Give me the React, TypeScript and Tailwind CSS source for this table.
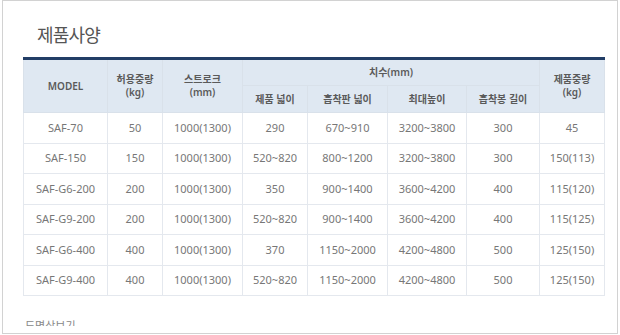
import React from 'react';

const rows = [
  ['SAF-70', '50', '1000(1300)', '290', '670~910', '3200~3800', '300', '45'],
  ['SAF-150', '150', '1000(1300)', '520~820', '800~1200', '3200~3800', '300', '150(113)'],
  ['SAF-G6-200', '200', '1000(1300)', '350', '900~1400', '3600~4200', '400', '115(120)'],
  ['SAF-G9-200', '200', '1000(1300)', '520~820', '900~1400', '3600~4200', '400', '115(125)'],
  ['SAF-G6-400', '400', '1000(1300)', '370', '1150~2000', '4200~4800', '500', '125(150)'],
  ['SAF-G9-400', '400', '1000(1300)', '520~820', '1150~2000', '4200~4800', '500', '125(150)'],
];

const widths = [84, 55, 80, 65, 80, 79, 73, 65];

const th = 'border border-[#d9e1ea] font-semibold text-[10px] leading-[13px] text-[#5a5a5a] text-center align-middle';
const td = 'border border-[#e4e8ee] text-[11px] text-[#777] text-center h-[30.5px] align-middle';

const App: React.FC = () => {
  return (
    <div
      className="w-[620px] h-[335px] bg-white"
      style={{ fontFamily: '"Noto Sans", "Noto Sans CJK KR", sans-serif' }}
    >
      <div className="ml-[2px] w-[616px] h-[334px] border border-[#d2d2d2] overflow-hidden">
        <div className="h-[325px] overflow-hidden pl-[20px]">
          <h1 className="pt-[22px] pl-[14px] text-[18px] leading-[24px] tracking-[-0.8px] text-[#555] font-normal">
            제품사양
          </h1>
          <table className="mt-[10px] table-fixed border-collapse w-[581px] border-t-[3px] border-t-[#223e66]">
            <colgroup>
              {widths.map((w, i) => (
                <col key={i} style={{ width: w }} />
              ))}
            </colgroup>
            <thead className="bg-[#dfe8f2]">
              <tr className="h-[27px]">
                <th rowSpan={2} className={`${th} border-t-0`}>MODEL</th>
                <th rowSpan={2} className={`${th} border-t-0`}>허용중량<br />(kg)</th>
                <th rowSpan={2} className={`${th} border-t-0`}>스트로크<br />(mm)</th>
                <th colSpan={4} className={`${th} border-t-0`}>치수(mm)</th>
                <th rowSpan={2} className={`${th} border-t-0`}>제품중량<br />(kg)</th>
              </tr>
              <tr className="h-[27px]">
                <th className={th}>제품 넓이</th>
                <th className={th}>흡착판 넓이</th>
                <th className={th}>최대높이</th>
                <th className={th}>흡착봉 길이</th>
              </tr>
            </thead>
            <tbody>
              {rows.map((r) => (
                <tr key={r[0]}>
                  {r.map((c, i) => (
                    <td key={i} className={td}>{c}</td>
                  ))}
                </tr>
              ))}
            </tbody>
          </table>
          <p className="mt-[22px] pl-[2px] text-[11px] text-[#888]">도면상보기</p>
        </div>
      </div>
    </div>
  );
};

export default App;
